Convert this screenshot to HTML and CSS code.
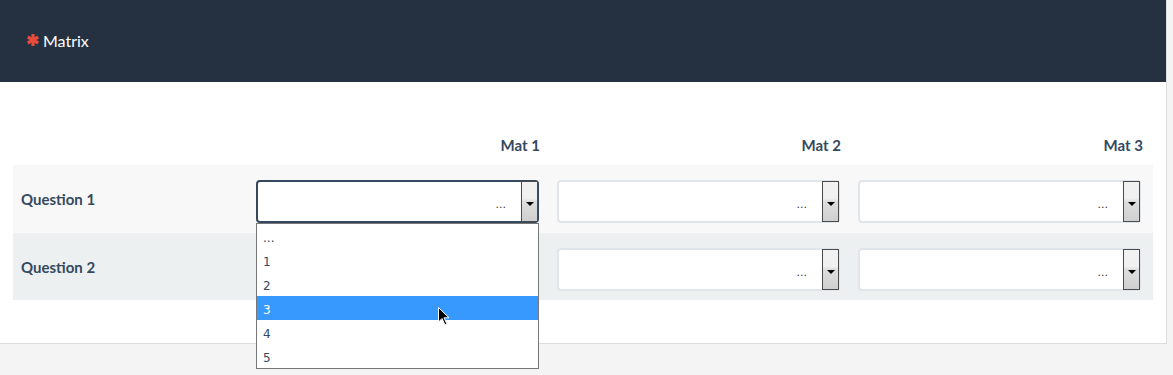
FILE: index.html
```html
<!DOCTYPE html>
<html>
<head>
<meta charset="utf-8">
<link rel="stylesheet" href="styles.css">
</head>
<body>
<div class="page">
  <div class="header">
    <svg class="req" width="12" height="12" viewBox="0 0 12 12"><g stroke="#e74c3c" stroke-width="3.2" stroke-linecap="butt"><line x1="6" y1="0" x2="6" y2="12"/><line x1="0.8" y1="3" x2="11.2" y2="9"/><line x1="0.8" y1="9" x2="11.2" y2="3"/></g></svg><span class="title">Matrix</span>
  </div>
  <div class="content">
    <div class="matrix">
      <div class="row head">
        <div class="cell label"></div>
        <div class="cell colhead">Mat 1</div>
        <div class="cell colhead">Mat 2</div>
        <div class="cell colhead">Mat 3</div>
      </div>
      <div class="row odd">
        <div class="cell label">Question 1</div>
        <div class="cell sel">
          <div class="select focused"><span class="val">...</span><span class="btn"><span class="tri"></span></span></div>
          <ul class="list">
            <li>...</li>
            <li>1</li>
            <li>2</li>
            <li class="hl">3</li>
            <li>4</li>
            <li>5</li>
          </ul>
          <svg class="cursor" width="12" height="19" viewBox="0 0 12 19"><path d="M0.5 0.5 L0.5 15 L4 11.5 L7 18 L9 17 L6 10.8 L11 10.8 Z" fill="#000" stroke="#fff" stroke-width="1"/></svg>
        </div>
        <div class="cell sel">
          <div class="select"><span class="val">...</span><span class="btn"><span class="tri"></span></span></div>
        </div>
        <div class="cell sel">
          <div class="select"><span class="val">...</span><span class="btn"><span class="tri"></span></span></div>
        </div>
      </div>
      <div class="row even">
        <div class="cell label">Question 2</div>
        <div class="cell sel">
          <div class="select"><span class="val">...</span><span class="btn"><span class="tri"></span></span></div>
        </div>
        <div class="cell sel">
          <div class="select"><span class="val">...</span><span class="btn"><span class="tri"></span></span></div>
        </div>
        <div class="cell sel">
          <div class="select"><span class="val">...</span><span class="btn"><span class="tri"></span></span></div>
        </div>
      </div>
    </div>
  </div>
</div>
</body>
</html>
```

FILE: styles.css
```css
html, body {
  margin: 0;
  padding: 0;
  background: #f4f4f4;
  font-family: Lato, "Open Sans", sans-serif;
  color: #34495e;
}
body {
  min-height: 375px;
}
.page {
  width: 1166px;
  background: #fff;
  border-right: 1px solid #dcdcdc;
  border-bottom: 1px solid #dcdcdc;
}
.header {
  height: 82px;
  background: #253141;
  display: flex;
  align-items: center;
  padding-left: 27px;
  padding-bottom: 2px;
  box-sizing: border-box;
}
.req {
  margin-right: 4px;
}
.title {
  color: #fff;
  font-size: 16px;
}
.content {
  padding: 48px 0 43px 13px;
}
.matrix {
  width: 1140px;
}
.row {
  display: grid;
  grid-template-columns: 237px 301px 301px 301px;
}
.row.head {
  height: 35px;
  align-items: start;
}
.row.odd {
  background: #f8f8f8;
  height: 68px;
}
.row.even {
  background: #ecf0f1;
  height: 67px;
}
.cell.label {
  display: flex;
  align-items: center;
  padding-left: 8px;
  padding-bottom: 1px;
  font-weight: bold;
  font-size: 15px;
  color: #34495e;
}
.cell.colhead {
  text-align: right;
  padding-right: 11px;
  font-weight: bold;
  font-size: 15px;
  line-height: 20px;
  color: #34495e;
  padding-top: 5px;
}
.cell.colhead:last-child {
  padding-right: 10px;
}
.cell.sel {
  padding: 15px 12px 10px 6px;
  position: relative;
}
.select {
  box-sizing: border-box;
  width: 283px;
  height: 43px;
  border: 2px solid #dfe5ea;
  border-radius: 4px;
  background: #fff;
  display: flex;
  align-items: center;
  justify-content: flex-end;
}
.select.focused {
  border-color: #34495e;
}
.val {
  font-family: "DejaVu Sans", sans-serif;
  font-size: 11px;
  color: #333;
  margin-right: 15px;
  margin-top: 6px;
}
.btn {
  box-sizing: border-box;
  width: 17px;
  height: 41px;
  margin-right: -1px;
  border: 1px solid #4a4a4a;
  background: linear-gradient(#f2f2f2 0%, #f0f0f0 42%, #dedede 50%, #cfcfcf 100%);
  display: flex;
  justify-content: center;
  padding-top: 20px;
}
.tri {
  width: 0;
  height: 0;
  border-left: 4px solid transparent;
  border-right: 4px solid transparent;
  border-top: 4px solid #000;
}
.list {
  position: absolute;
  left: 6px;
  top: 58px;
  width: 283px;
  box-sizing: border-box;
  margin: 0;
  padding: 0;
  list-style: none;
  background: #fff;
  border: 1px solid #777;
  z-index: 5;
}
.list li {
  height: 24px;
  line-height: 28px;
  padding-left: 6px;
  font-family: "DejaVu Sans", sans-serif;
  font-size: 12px;
  color: #34495e;
}
.list li.hl {
  background: #3799fd;
  color: #fff;
}
.cursor {
  position: absolute;
  left: 188px;
  top: 142px;
  z-index: 6;
}
```
